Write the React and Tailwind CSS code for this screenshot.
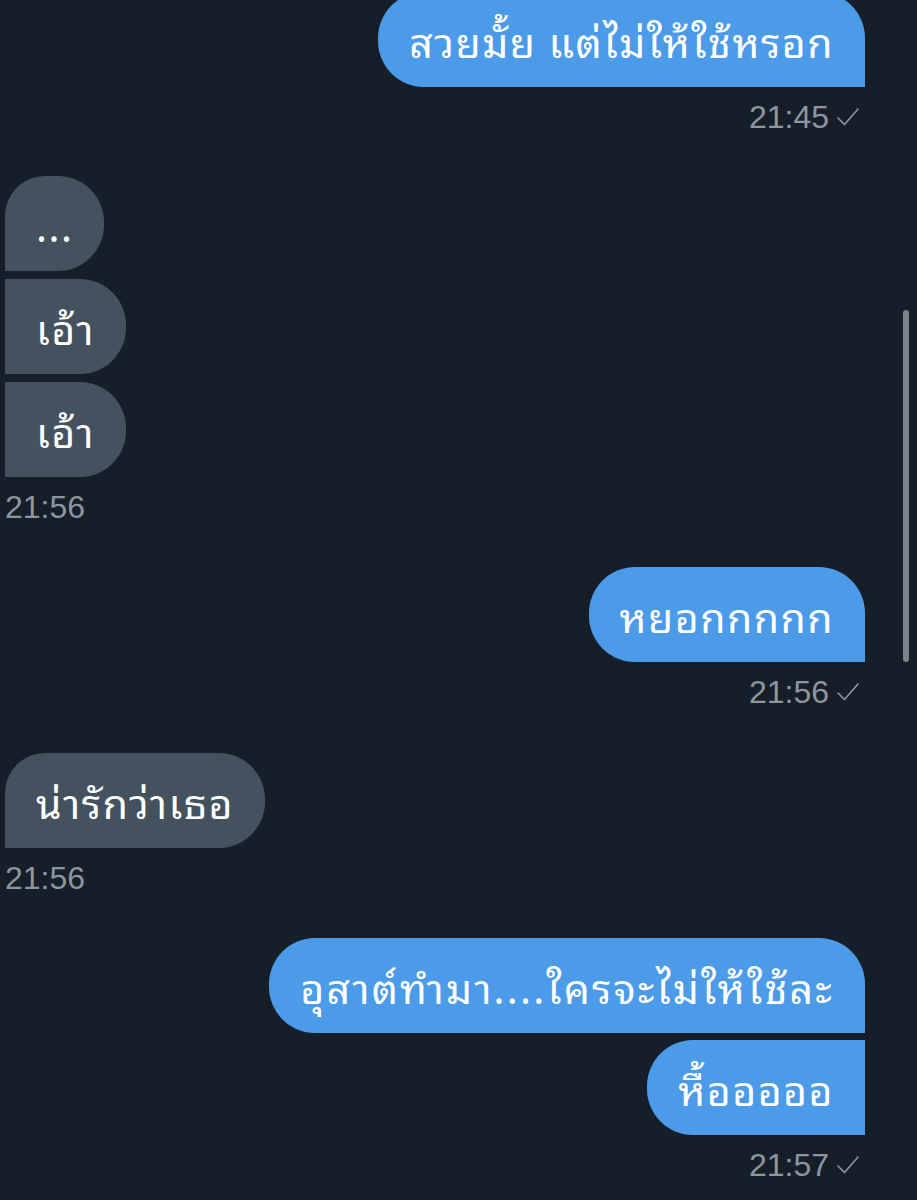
import React from "react";

const thai = { fontFamily: '"Noto Sans Thai Looped", "Noto Sans Thai", "Noto Sans", "DejaVu Sans", sans-serif' };

function Check() {
  return (
    <svg width="24" height="22" viewBox="0 0 24 22" fill="none" className="ml-[7px]">
      <path d="M2 12 L8.5 18.5 L22 3" stroke="#8d959e" strokeWidth="1.6" strokeLinecap="round" strokeLinejoin="round" />
    </svg>
  );
}

function Time({ text, sent }) {
  return (
    <div
      className={`mt-[12px] flex items-center h-[36px] text-[32px] text-[#8d959e] ${sent ? "justify-end pr-[5px]" : "pl-[5px]"}`}
      style={{ fontFamily: '"Liberation Sans", Arial, sans-serif' }}
    >
      <span>{text}</span>
      {sent && <Check />}
    </div>
  );
}

function Bubble({ children, sent, className = "" }) {
  return (
    <div
      className={`h-[95px] flex items-center px-[31px] text-[41px] tracking-[1.5px] text-white ${sent ? "bg-[#4b9be9]" : "bg-[#44525f]"} ${className}`}
      style={thai}
    >
      {children}
    </div>
  );
}

export default function App() {
  return (
    <div className="relative w-[917px] h-[1200px] overflow-hidden bg-[#161e29]">
      <div className="absolute right-[8px] top-[310px] w-[6px] h-[352px] rounded-full bg-[#7c838b]" />

      <div className="flex flex-col">
        {/* sent */}
        <div className="flex flex-col items-end pr-[52px] -mt-[8px]">
          <Bubble sent className="rounded-tl-[46px] rounded-tr-[46px] rounded-bl-[46px]">
            สวยมั้ย แต่ไม่ให้ใช้หรอก
          </Bubble>
          <Time text="21:45" sent />
        </div>

        {/* received */}
        <div className="flex flex-col items-start pl-[5px] mt-[41px] gap-[8px]">
          <Bubble className="rounded-tl-[40px] rounded-tr-[46px] rounded-br-[46px]">...</Bubble>
          <Bubble className="rounded-tr-[46px] rounded-br-[46px]">เอ้า</Bubble>
          <Bubble className="rounded-tr-[46px] rounded-br-[46px]">เอ้า</Bubble>
        </div>
        <Time text="21:56" />

        <div className="flex flex-col items-end pr-[52px] mt-[42px]">
          <Bubble sent className="rounded-tl-[46px] rounded-tr-[46px] rounded-bl-[46px]">
            หยอกกกกก
          </Bubble>
          <Time text="21:56" sent />
        </div>

        <div className="flex flex-col items-start pl-[5px] mt-[43px]">
          <Bubble className="rounded-tl-[40px] rounded-tr-[46px] rounded-br-[46px]">น่ารักว่าเธอ</Bubble>
        </div>
        <Time text="21:56" />

        <div className="flex flex-col items-end pr-[52px] mt-[42px]">
          <div className="flex flex-col items-end gap-[7px]">
            <Bubble sent className="rounded-tl-[46px] rounded-tr-[46px] rounded-bl-[46px] tracking-[2.2px]">
              อุสาต์ทำมา....ใครจะไม่ให้ใช้ละ
            </Bubble>
            <Bubble sent className="rounded-tl-[46px] rounded-bl-[46px]">
              หื้อออออ
            </Bubble>
          </div>
          <Time text="21:57" sent />
        </div>
      </div>
    </div>
  );
}
